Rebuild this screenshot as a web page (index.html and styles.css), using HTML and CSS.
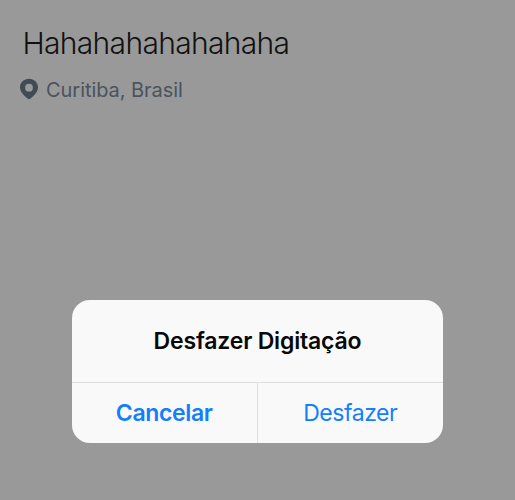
FILE: index.html
```html
<!DOCTYPE html>
<html lang="pt-BR">
<head>
<meta charset="utf-8">
<title>Desfazer Digitação</title>
<link rel="stylesheet" href="styles.css">
</head>
<body>
<main class="compose">
  <p class="draft">Hahahahahahahaha</p>
  <div class="location">
    <svg class="pin" viewBox="0 0 20 22"><path fill-rule="evenodd" d="M10 .7C4.900.7 1 4.500 1 9.300c0 3.700 2 6.300 4.600 8.600l3.200 2.800c.7.600 1.700.6 2.400 0l3.200-2.800C17 15.600 19 13 19 9.300 19 4.500 15.100.7 10 .7Zm0 5.100a3.900 3.900 0 1 1 0 7.800 3.900 3.900 0 0 1 0-7.800Z"/></svg>
    <span class="place">Curitiba, Brasil</span>
  </div>
  <section class="alert" role="alertdialog">
    <h1 class="title">Desfazer Digitação</h1>
    <div class="actions">
      <button class="action cancel">Cancelar</button>
      <button class="action undo">Desfazer</button>
    </div>
  </section>
</main>
</body>
</html>
```
FILE: styles.css
```css
* { box-sizing: border-box; }
body { margin: 0; background: #999; font-family: Inter, "Liberation Sans", sans-serif; }
.compose { height: 500px; overflow: hidden; padding-top: 24px; }
.draft { margin: 0 0 0 22.500px; font-size: 30px; line-height: 38px; font-weight: 300; letter-spacing: -0.68px; color: #111; }
.location { display: flex; align-items: center; margin: 13px 0 0 19px; height: 28px; color: #414b56; }
.pin { width: 20px; height: 22px; fill: currentColor; }
.place { margin: 1px 0 0 7px; font-size: 20px; letter-spacing: -0.05px; color: #4a535f; }
.alert { width: 371px; height: 143px; margin: 197px 0 0 72px; border-radius: 18px; overflow: hidden; background: #f9f9f9; display: flex; flex-direction: column; }
.title { margin: 0; height: 82px; line-height: 82px; text-align: center; font-size: 23px; font-weight: 600; letter-spacing: -0.18px; color: #080808; }
.actions { flex: 1; display: grid; grid-template-columns: 1fr 1fr; border-top: 1px solid #dedede; }
.action { border: 0; padding: 0; background: none; font: 400 23px Inter, sans-serif; letter-spacing: -0.45px; color: #147efb; }
.cancel { font-weight: 600; letter-spacing: -0.35px; border-right: 1px solid #dedede; }
```
